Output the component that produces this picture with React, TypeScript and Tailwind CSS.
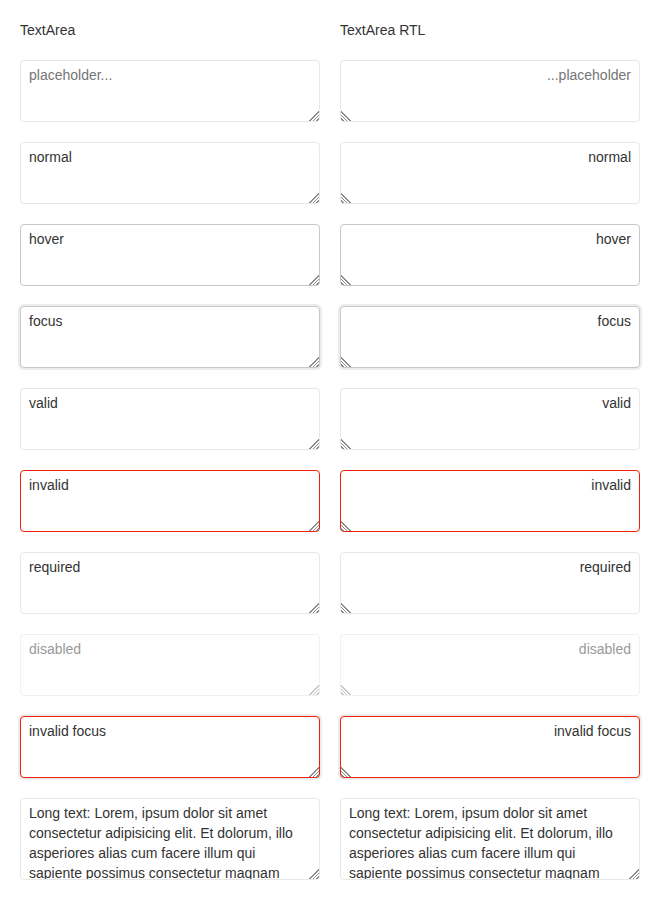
import React from 'react';

type Variant = 'placeholder' | 'normal' | 'hover' | 'focus' | 'valid' | 'invalid' | 'required' | 'disabled' | 'invalidFocus';

const rows: { key: Variant; label: string }[] = [
  { key: 'placeholder', label: '' },
  { key: 'normal', label: 'normal' },
  { key: 'hover', label: 'hover' },
  { key: 'focus', label: 'focus' },
  { key: 'valid', label: 'valid' },
  { key: 'invalid', label: 'invalid' },
  { key: 'required', label: 'required' },
  { key: 'disabled', label: 'disabled' },
  { key: 'invalidFocus', label: 'invalid focus' },
];

const variantClass: Record<Variant, string> = {
  placeholder: 'border-[#e8e8e8]',
  normal: 'border-[#e8e8e8]',
  hover: 'border-[#c8c8c8]',
  focus: 'border-[#c8c8c8] shadow-[0_0_0_2px_#ececec]',
  valid: 'border-[#e8e8e8]',
  invalid: 'border-[#f0200a]',
  required: 'border-[#e8e8e8]',
  disabled: 'border-[#f0f0f0] text-[#999] bg-white',
  invalidFocus: 'border-[#f0200a] shadow-[0_0_0_2px_#ececec]',
};

const longText =
  'Long text: Lorem, ipsum dolor sit amet consectetur adipisicing elit. Et dolorum, illo asperiores alias cum facere illum qui sapiente possimus consectetur magnam quibusdam, ipsam reiciendis.';

const base =
  'block w-full box-border border rounded-[4px] px-2 pt-1 text-[14px] leading-[20px] text-[#333] bg-white outline-none overflow-hidden placeholder:text-[#757575] font-["Liberation_Sans",Arial,sans-serif]';

// hatched resize grip, drawn on the native resizer
const gripLtr =
  '[&::-webkit-resizer]:bg-[image:linear-gradient(135deg,#fff_58%,transparent_58%),repeating-linear-gradient(135deg,transparent_0_1.5px,#8a8a8a_1.5px_2.5px)]';
const gripRtl =
  '[&::-webkit-resizer]:bg-[image:linear-gradient(225deg,#fff_58%,transparent_58%),repeating-linear-gradient(225deg,transparent_0_1.5px,#8a8a8a_1.5px_2.5px)]';
const gripLtrLight =
  '[&::-webkit-resizer]:bg-[image:linear-gradient(135deg,#fff_58%,transparent_58%),repeating-linear-gradient(135deg,transparent_0_1.5px,#c4c4c4_1.5px_2.5px)]';
const gripRtlLight =
  '[&::-webkit-resizer]:bg-[image:linear-gradient(225deg,#fff_58%,transparent_58%),repeating-linear-gradient(225deg,transparent_0_1.5px,#c4c4c4_1.5px_2.5px)]';

const Field = ({ v, label, rtl }: { v: Variant; label: string; rtl: boolean }) => {
  const grip = v === 'disabled' ? (rtl ? gripRtlLight : gripLtrLight) : rtl ? gripRtl : gripLtr;
  return (
    <textarea
      dir={rtl ? 'rtl' : 'ltr'}
      readOnly
      disabled={v === 'disabled'}
      placeholder={v === 'placeholder' ? 'placeholder...' : undefined}
      defaultValue={label}
      className={`${base} ${grip} h-[62px] ${variantClass[v]}`}
    />
  );
};

const Column = ({ title, rtl }: { title: string; rtl: boolean }) => (
  <div className="flex flex-col gap-5">
    <div className="text-[14px] leading-[20px] text-[#333]">{title}</div>
    {rows.map((r) => (
      <Field key={r.key} v={r.key} label={r.label} rtl={rtl} />
    ))}
    <textarea readOnly defaultValue={longText} className={`${base} ${gripLtr} h-[82px] border-[#e8e8e8]`} />
  </div>
);

export default function App() {
  return (
    <div className='grid grid-cols-2 gap-5 p-5 bg-white font-["Liberation_Sans",Arial,sans-serif]'>
      <Column title="TextArea" rtl={false} />
      <Column title="TextArea RTL" rtl={true} />
    </div>
  );
}
